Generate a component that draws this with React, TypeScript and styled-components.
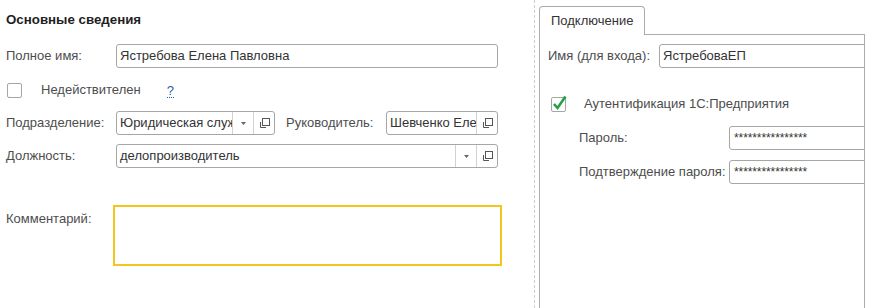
import React from "react"
import styled, { createGlobalStyle } from "styled-components"

const GlobalStyle = createGlobalStyle`
  html, body {
    margin: 0;
    padding: 0;
    background: #fff;
    overflow: hidden;
  }
  body {
    font-family: "Liberation Sans", Arial, sans-serif;
    font-size: 13px;
    color: #4d4d4d;
  }
`

const Page = styled.div`
  display: flex;
  width: 876px;
  height: 308px;
  overflow: hidden;
`

const LeftColumn = styled.div`
  width: 534px;
  flex-shrink: 0;
  padding: 12px 0 0 6px;
  box-sizing: border-box;
`

const Separator = styled.div`
  width: 0;
  height: 308px;
  border-left: 1px dashed #cfcfcf;
  margin-right: 4px;
`

const Title = styled.div`
  font-weight: bold;
  font-size: 13.3px;
  color: #1f1f1f;
  line-height: 16px;
  height: 16px;
`

const Row = styled.div<{ $top: number }>`
  display: flex;
  align-items: center;
  height: 24px;
  margin-top: ${({ $top }) => $top}px;
`

const Label = styled.div<{ $width: number }>`
  width: ${({ $width }) => $width}px;
  flex-shrink: 0;
  line-height: 16px;
  white-space: nowrap;
`

const Field = styled.div<{ $width: number }>`
  display: flex;
  width: ${({ $width }) => $width}px;
  height: 24px;
  box-sizing: border-box;
  border: 1px solid #a6a6a6;
  border-radius: 3px;
  background: #fff;
  flex-shrink: 0;
  overflow: hidden;
`

const FieldText = styled.div`
  flex: 1;
  min-width: 0;
  padding: 0 3px;
  line-height: 22px;
  color: #333;
  white-space: nowrap;
  overflow: hidden;
`

const FieldButton = styled.div`
  width: 20px;
  flex-shrink: 0;
  display: flex;
  align-items: center;
  justify-content: center;
  border-left: 1px solid #d2d2d2;
`

const Checkbox = styled.div`
  width: 15px;
  height: 15px;
  box-sizing: border-box;
  border: 1px solid #a6a6a6;
  border-radius: 2px;
  margin-left: 1px;
  flex-shrink: 0;
`

const CheckText = styled.span`
  margin-left: 19px;
  line-height: 16px;
`

const Help = styled.span`
  margin-left: 26px;
  color: #1f5fae;
  border-bottom: 1px dotted #1f5fae;
  line-height: 13px;
  margin-top: 2px;
`

const CommentRow = styled.div`
  display: flex;
  margin-top: 37px;
`

const CommentLabel = styled.div`
  width: 107px;
  padding-top: 6px;
  line-height: 16px;
`

const CommentBox = styled.div`
  width: 389px;
  height: 61px;
  box-sizing: border-box;
  border: 2px solid #f4c51c;
`

const RightColumn = styled.div`
  display: flex;
  flex-direction: column;
  padding-top: 6px;
`

const Tab = styled.div`
  width: 106px;
  height: 29px;
  box-sizing: border-box;
  border: 1px solid #ababab;
  border-bottom: none;
  border-radius: 4px 4px 0 0;
  background: #fff;
  color: #333;
  line-height: 27px;
  padding-left: 11px;
  margin-bottom: -1px;
  position: relative;
  z-index: 1;
`

const Panel = styled.div`
  width: 326px;
  flex: 1;
  box-sizing: border-box;
  border: 1px solid #ababab;
  border-bottom: none;
  overflow: hidden;
  padding-left: 8px;
`

const Indented = styled(Row)`
  padding-left: 31px;
`

const CheckWrap = styled.div`
  display: flex;
  margin-left: 3px;
`

const PasswordText = styled(FieldText)`
  font-size: 12px;
  padding-left: 4px;
  letter-spacing: -0.1px;
`

const OpenIcon = () => (
  <svg width="11" height="11" viewBox="0 0 11 11">
    <rect x="3.5" y="0.5" width="7" height="7" fill="none" stroke="#555" />
    <path d="M1.5 4 V9.5 H7" fill="none" stroke="#555" />
  </svg>
)

const DropIcon = () => (
  <svg width="5" height="3" viewBox="0 0 5 3">
    <path d="M0 0 H5 L2.5 3 Z" fill="#666" />
  </svg>
)

const GreenCheck = () => (
  <svg width="18" height="18" viewBox="0 0 18 18" style={{ marginTop: -3 }}>
    <rect x="0.5" y="3.5" width="14" height="14" rx="1.5" fill="none" stroke="#a6a6a6" />
    <path d="M3 10 L6.5 14 L14.5 2.5" fill="none" stroke="#26a047" strokeWidth="2.6" />
  </svg>
)

const App: React.FC = () => (
  <Page>
    <GlobalStyle />
    <LeftColumn>
      <Title>Основные сведения</Title>
      <Row $top={16}>
        <Label $width={110}>Полное имя:</Label>
        <Field $width={382}>
          <FieldText>Ястребова Елена Павловна</FieldText>
        </Field>
      </Row>
      <Row $top={10}>
        <Checkbox />
        <CheckText>Недействителен</CheckText>
        <Help>?</Help>
      </Row>
      <Row $top={9}>
        <Label $width={110}>Подразделение:</Label>
        <Field $width={159}>
          <FieldText>Юридическая служба</FieldText>
          <FieldButton>
            <DropIcon />
          </FieldButton>
          <FieldButton>
            <OpenIcon />
          </FieldButton>
        </Field>
        <Label $width={100} style={{ marginLeft: 11 }}>Руководитель:</Label>
        <Field $width={112}>
          <FieldText>Шевченко Елена</FieldText>
          <FieldButton>
            <OpenIcon />
          </FieldButton>
        </Field>
      </Row>
      <Row $top={9}>
        <Label $width={110}>Должность:</Label>
        <Field $width={382}>
          <FieldText>делопроизводитель</FieldText>
          <FieldButton>
            <DropIcon />
          </FieldButton>
          <FieldButton>
            <OpenIcon />
          </FieldButton>
        </Field>
      </Row>
      <CommentRow>
        <CommentLabel>Комментарий:</CommentLabel>
        <CommentBox />
      </CommentRow>
    </LeftColumn>
    <Separator />
    <RightColumn>
      <Tab>Подключение</Tab>
      <Panel>
        <Row $top={9}>
          <Label $width={111}>Имя (для входа):</Label>
          <Field $width={240}>
            <FieldText>ЯстребоваЕП</FieldText>
          </Field>
        </Row>
        <Row $top={24}>
          <CheckWrap>
            <GreenCheck />
          </CheckWrap>
          <CheckText style={{ marginLeft: 15 }}>Аутентификация 1С:Предприятия</CheckText>
        </Row>
        <Indented $top={10}>
          <Label $width={150}>Пароль:</Label>
          <Field $width={200}>
            <PasswordText>****************</PasswordText>
          </Field>
        </Indented>
        <Indented $top={10}>
          <Label $width={150}>Подтверждение пароля:</Label>
          <Field $width={200}>
            <PasswordText>****************</PasswordText>
          </Field>
        </Indented>
      </Panel>
    </RightColumn>
  </Page>
)

export default App
